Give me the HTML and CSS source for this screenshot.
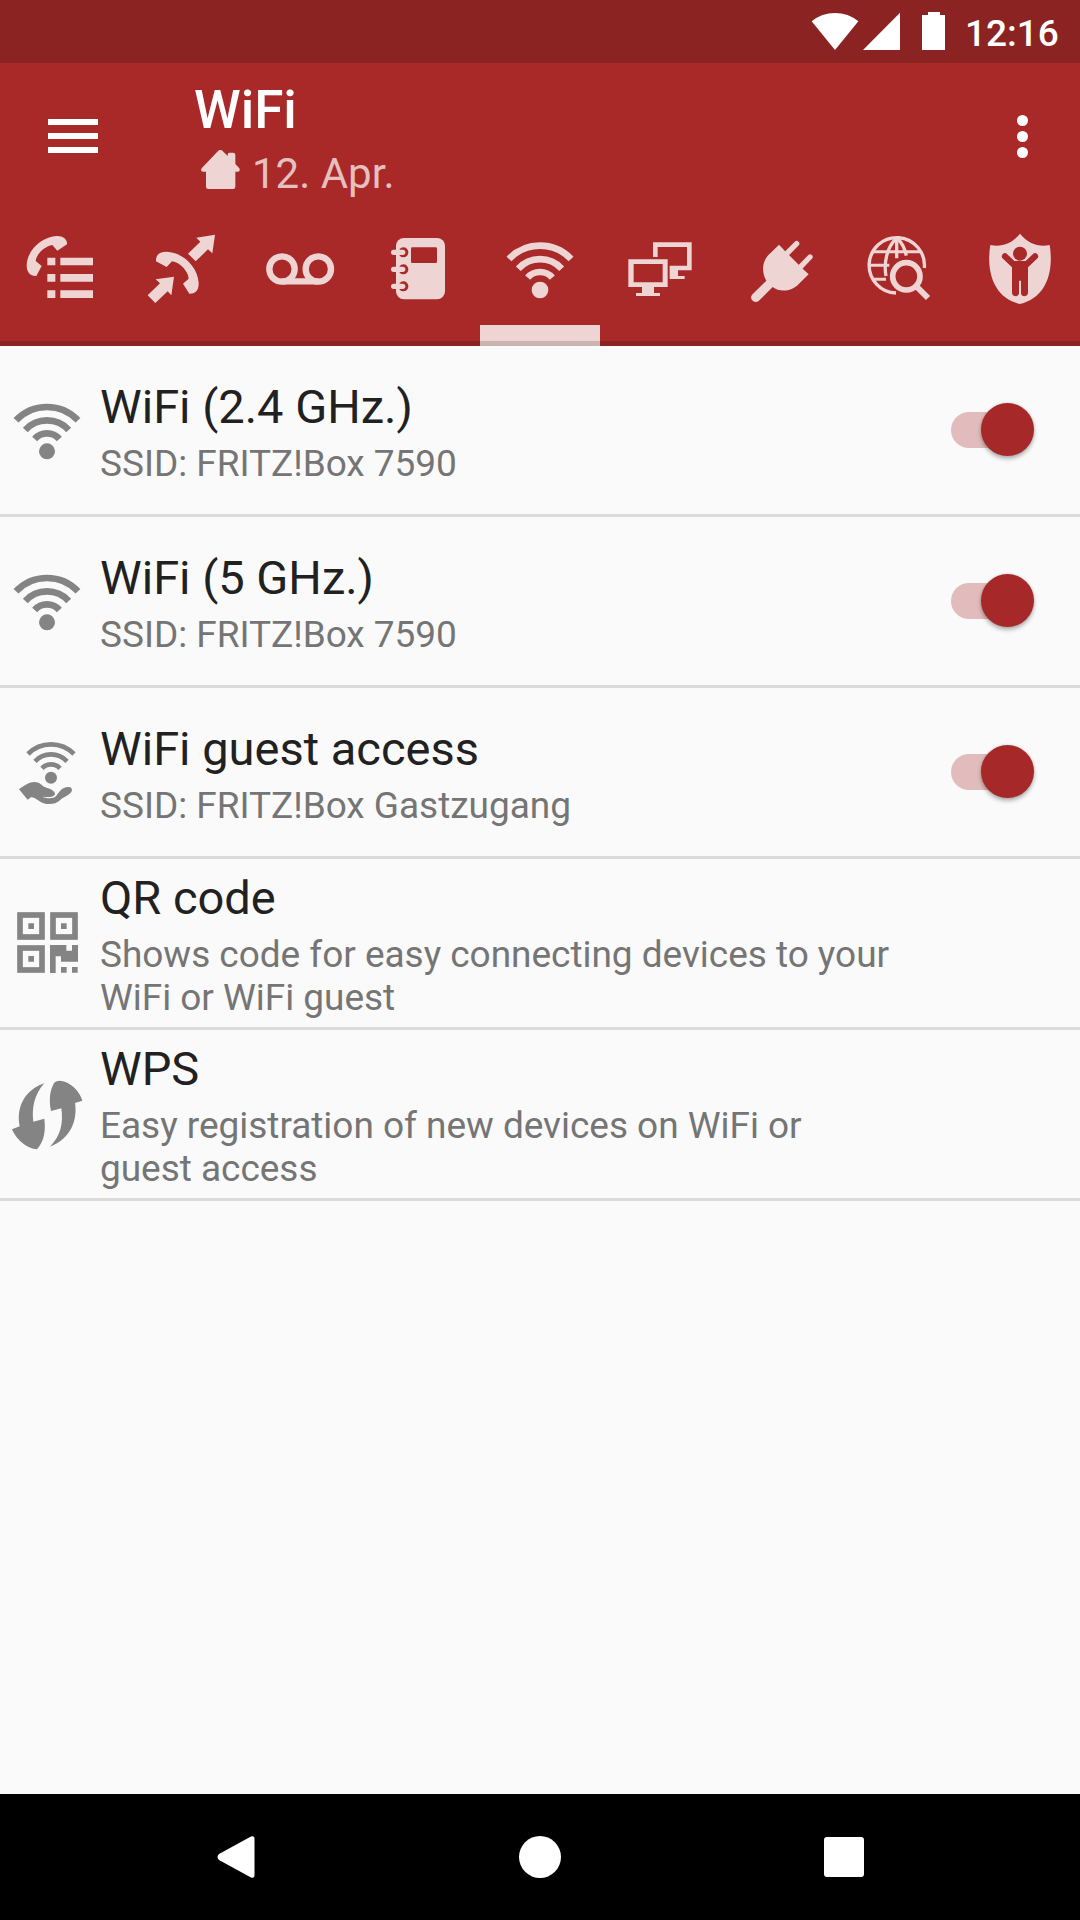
FILE: index.html
```html
<!DOCTYPE html>
<html lang="en">
<head>
  <meta charset="UTF-8">
  <meta name="viewport" content="width=device-width, initial-scale=1.0">
  <title>WiFi</title>
  <link rel="stylesheet" href="styles.css">
</head>
<body>

  <div class="screen">
    <div class="status-bar">
      <svg class="status-icons" viewBox="90 0 405 189">
        <path d="M95 64Q125 39 165 39T235 64L165 150Z"/>
        <path d="M360 38V150H249Z"/>
        <path d="M426 45H444V36H480V45H498V150H426Z"/>
      </svg>
      <span class="clock">12:16</span>
    </div>

    <header class="toolbar">
      <button class="menu-button" aria-label="Menu">
        <span></span>
        <span></span>
        <span></span>
      </button>
      <div class="heading">
        <h1>WiFi</h1>
        <div class="subtitle">
          <svg class="home-icon" viewBox="603 270 117 117">
            <path d="M655 272Q661 267 667 272L683 288V284Q683 278 689 278H699Q706 278 706 284V312L718 325Q722 335 713 335H706V380Q706 387 699 387H625Q618 387 618 380V335H610Q600 335 605 325Z"/>
          </svg>
          <span>12. Apr.</span>
        </div>
      </div>
      <button class="more-button" aria-label="More options">
        <span></span>
        <span></span>
        <span></span>
      </button>
    </header>

    <nav class="tabs">
      <!-- call list -->
      <a class="tab">
        <svg viewBox="0 0 360 408">
          <path d="M170 78C188 77 203 88 201 103L172 122L157 105C135 108 109 132 107 153L125 168L109 198C92 199 80 189 80 165C83 115 130 80 170 78Z"/>
          <path d="M142 143h24v23h-24zM181 143h98v23h-98zM142 192h24v23h-24zM181 192h98v23h-98zM142 241h24v23h-24zM181 241h98v23h-98z"/>
        </svg>
      </a>
      <!-- call redirection -->
      <a class="tab">
        <svg viewBox="360 0 360 408">
          <path d="M468 154C467 133 480 125 500 125C550 127 593 172 596 218C597 245 582 252 568 251L549 221L566 206C565 185 540 156 516 154L500 171Z"/>
          <path d="M645 74L637 130L624 118L587 154L564 131L601 95L589 83Z"/>
          <path d="M522 200L514 256L503 244L466 279L443 256L480 220L467 208Z"/>
        </svg>
      </a>
      <!-- voicemail -->
      <a class="tab">
        <svg class="line" viewBox="720 0 360 408">
          <g stroke-width="19">
            <circle cx="846" cy="177" r="38"/>
            <circle cx="955" cy="177" r="38"/>
            <path d="M846 214H955"/>
          </g>
        </svg>
      </a>
      <!-- phone book -->
      <a class="tab">
        <svg viewBox="0 0 360 408">
          <rect x="108" y="84" width="147" height="184" rx="24"/>
          <rect class="cut" x="153" y="112" width="78" height="47" rx="4"/>
          <g class="cut">
            <path d="M119 117A15 15 0 1 1 119 137Z"/>
            <path d="M119 168A15 15 0 1 1 119 188Z"/>
            <path d="M119 219A15 15 0 1 1 119 239Z"/>
          </g>
          <rect x="93" y="119" width="43" height="16" rx="8"/>
          <rect x="93" y="170" width="43" height="16" rx="8"/>
          <rect x="93" y="221" width="43" height="16" rx="8"/>
        </svg>
      </a>
      <!-- wifi -->
      <a class="tab active">
        <svg viewBox="360 0 360 408">
          <circle cx="540" cy="240" r="25"/>
          <g class="line" stroke-width="20">
            <path d="M447 147A128 128 0 0 1 633 147"/>
            <path d="M475 176A88 88 0 0 1 605 176"/>
            <path d="M503 203A49 49 0 0 1 577 203"/>
          </g>
        </svg>
      </a>
      <!-- network devices -->
      <a class="tab">
        <svg viewBox="720 0 360 408">
          <path d="M879 97H995V181H954V198H974V207H929V167H981V111H893V141H879Z"/>
          <path fill-rule="evenodd" d="M805 148H923V231H882V249H900V258H828V249H846V231H805ZM821 162V217H908V162Z"/>
        </svg>
      </a>
      <!-- smart home -->
      <a class="tab">
        <svg viewBox="0 0 360 408">
          <path d="M177 104L194 122L248 176L266 193L237 221C214 246 178 247 158 231L116 273A14 14 0 0 1 96 254L139 212C124 188 125 151 151 130Z"/>
          <path class="line" stroke-width="16" stroke-linecap="round" d="M199 132L230 101M240 172L270 141"/>
        </svg>
      </a>
      <!-- online monitor -->
      <a class="tab">
        <svg class="line" viewBox="360 0 360 408">
          <path stroke-width="10" d="M613 174A83 83 0 1 0 528 249"/>
          <path stroke-width="9" d="M462 125H602M448 166H508M462 208H498"/>
          <path stroke-width="10" d="M530 84V145M528 86C500 112 491 160 498 198M533 86C548 100 555 117 559 137"/>
          <circle stroke-width="17" cx="559" cy="199" r="41"/>
          <path stroke-width="18" d="M588 228L624 264"/>
        </svg>
      </a>
      <!-- parental control -->
      <a class="tab">
        <svg viewBox="720 0 360 408">
          <path d="M900 71C876 100 846 112 811 105C797 193 826 265 900 282C974 265 1003 193 989 105C955 112 924 100 900 71Z"/>
          <g class="cut">
            <circle cx="900" cy="131" r="21"/>
            <path d="M861 132L883 153H917L939 132A9 9 0 0 1 951 146L924 172V248A11 11 0 0 1 903 252V212H897V252A11 11 0 0 1 876 248V172L849 146A9 9 0 0 1 861 132Z"/>
          </g>
        </svg>
      </a>
    </nav>

    <main class="list">
      <div class="row">
        <svg class="row-icon" viewBox="0 -73 264 504">
          <circle cx="141" cy="243" r="24"/>
          <g class="line" stroke-width="20">
            <path d="M48 150A128 128 0 0 1 234 150"/>
            <path d="M76 179A88 88 0 0 1 206 179"/>
            <path d="M104 206A49 49 0 0 1 178 206"/>
          </g>
        </svg>
        <div class="row-text">
          <h2>WiFi (2.4 GHz.)</h2>
          <p>SSID: FRITZ!Box 7590</p>
        </div>
        <div class="switch"><span class="thumb"></span></div>
      </div>

      <div class="row">
        <svg class="row-icon" viewBox="0 -73 264 504">
          <circle cx="141" cy="243" r="24"/>
          <g class="line" stroke-width="20">
            <path d="M48 150A128 128 0 0 1 234 150"/>
            <path d="M76 179A88 88 0 0 1 206 179"/>
            <path d="M104 206A49 49 0 0 1 178 206"/>
          </g>
        </svg>
        <div class="row-text">
          <h2>WiFi (5 GHz.)</h2>
          <p>SSID: FRITZ!Box 7590</p>
        </div>
        <div class="switch"><span class="thumb"></span></div>
      </div>

      <div class="row">
        <svg class="row-icon" viewBox="0 -66 264 504">
          <circle cx="153" cy="203" r="18"/>
          <g class="line" stroke-width="14">
            <path d="M84 132A97 97 0 0 1 222 132"/>
            <path d="M105 154A66 66 0 0 1 201 154"/>
            <path d="M126 175A37 37 0 0 1 180 175"/>
          </g>
          <path d="M57 238C74 226 86 216 104 216C120 216 126 228 136 232C151 237 165 243 165 252C162 263 142 262 127 260C142 266 160 267 169 257C177 247 186 231 204 231Q216 230 216 241C213 255 190 261 181 270C165 286 135 285 121 275C106 265 99 261 93 262L83 269Z"/>
        </svg>
        <div class="row-text">
          <h2>WiFi guest access</h2>
          <p>SSID: FRITZ!Box Gastzugang</p>
        </div>
        <div class="switch"><span class="thumb"></span></div>
      </div>

      <div class="row">
        <svg class="row-icon" viewBox="0 -3 264 504">
          <g class="line" stroke-width="17">
            <rect x="60" y="165" width="66" height="66"/>
            <rect x="159" y="165" width="66" height="66"/>
            <rect x="60" y="264" width="66" height="66"/>
          </g>
          <path d="M85 190h17v17h-17zM183 190h17v17h-17zM85 288h17v17h-17zM183 321h17v17h-17zM216 321h17v17h-17z"/>
          <path d="M150 255H199V272H216V255H234V305H183V289H167V339H150Z"/>
        </svg>
        <div class="row-text">
          <h2>QR code</h2>
          <p>Shows code for easy connecting devices to your WiFi or WiFi guest</p>
        </div>
      </div>

      <div class="row">
        <svg class="row-icon" viewBox="0 0 264 504">
          <path d="M133 160C92 173 45 215 59 289L36 298C47 326 80 357 111 358C134 332 137 300 133 266L100 275C95 236 102 194 133 160Z"/>
          <path d="M150 350C183 316 190 280 184 235L153 243C146 209 150 180 162 160Q166 152 180 152C213 155 240 185 247 212L225 219C233 272 212 326 150 350Z"/>
        </svg>
        <div class="row-text">
          <h2>WPS</h2>
          <p>Easy registration of new devices on WiFi or guest access</p>
        </div>
      </div>
    </main>

    <footer class="nav-bar">
      <div class="nav-item">
        <svg viewBox="0 0 42 42"><path d="M36 .5Q39.500-.5 39.500 3V39Q39.500 42.500 36 41.500L4 24Q1 21 4 18Z"/></svg>
      </div>
      <div class="nav-item">
        <svg viewBox="0 0 42 42"><circle cx="21" cy="21" r="21"/></svg>
      </div>
      <div class="nav-item">
        <svg viewBox="0 0 42 42"><rect x="1" y="1" width="40" height="40" rx="3"/></svg>
      </div>
    </footer>
  </div>

</body>
</html>
```

FILE: styles.css
```css
* {
  box-sizing: border-box;
}
body {
  margin: 0;
  font-family: Roboto, "Noto Sans", sans-serif;
  background-color: #fafafa;
}
h1, h2, p {
  margin: 0;
}
button {
  padding: 0;
  border: none;
  background: none;
}
svg {
  display: block;
  fill: currentColor;
}
.line {
  fill: none;
  stroke: currentColor;
}
.cut {
  fill: #a92929;
}
.screen {
  display: flex;
  flex-direction: column;
  width: 1080px;
  height: 1920px;
}

/* status bar */
.status-bar {
  display: flex;
  justify-content: flex-end;
  align-items: center;
  height: 63px;
  padding-right: 21px;
  background-color: #8c2323;
  color: #fff;
}
.status-icons {
  width: 135px;
  height: 63px;
  margin-right: 20px;
}
.clock {
  width: 94px;
  font-size: 37px;
  font-weight: 500;
  line-height: 43px;
  padding-top: 3px;
}

/* toolbar */
.toolbar {
  display: flex;
  height: 147px;
  background-color: #a92929;
  color: #fff;
}
.menu-button {
  display: flex;
  flex-direction: column;
  gap: 8.5px;
  width: 50px;
  margin: 56px 96px 0 48px;
}
.menu-button span {
  height: 5.6px;
  background-color: #fff;
}
.heading {
  flex: 1;
  padding-top: 16px;
}
.heading h1 {
  font-size: 53px;
  font-weight: 500;
  line-height: 62px;
}
.subtitle {
  display: flex;
  align-items: center;
  gap: 12px;
  padding-left: 7px;
  font-size: 42px;
  line-height: 49px;
  color: #e6bfbf;
  margin-top: 8px;
}
.home-icon {
  width: 39px;
  height: 39px;
  color: #efd4d4;
  margin-bottom: 8px;
}
.more-button {
  display: flex;
  flex-direction: column;
  gap: 5px;
  width: 11px;
  margin: 52px 52px 0 0;
}
.more-button span {
  height: 11px;
  border-radius: 50%;
  background-color: #fff;
}

/* tabs */
.tabs {
  display: grid;
  grid-template-columns: repeat(9, 120px);
  height: 136px;
  background: linear-gradient(#a92929 131px, #8c2323 131px);
  color: #efd4d4;
}
.tab svg {
  width: 120px;
  height: 136px;
}
.tab.active {
  background: linear-gradient(transparent 115px, #efd4d4 115px, #efd4d4 131px, #c9b4b2 131px);
}

/* list */
.list {
  flex: 1;
}
.row {
  display: flex;
  align-items: center;
  height: 171px;
  border-bottom: 3px solid #dbdbdb;
}
.row-icon {
  width: 88px;
  height: 168px;
  color: #848484;
}
.row-text {
  width: 800px;
  margin-left: 12px;
  padding: 3px 4px 0 0;
}
.row-text h2 {
  font-size: 47px;
  font-weight: 400;
  line-height: 56px;
  color: #212121;
}
.row-text p {
  font-size: 37px;
  line-height: 43px;
  letter-spacing: -0.03px;
  margin-top: 7px;
  color: #757575;
}
.switch {
  display: flex;
  align-items: center;
  justify-content: flex-end;
  width: 83px;
  height: 36px;
  margin-left: 51px;
  margin-bottom: 1px;
  border-radius: 18px;
  background: linear-gradient(90deg, #e2bcbc 60px, transparent 60px);
}
.thumb {
  flex: none;
  width: 53px;
  height: 53px;
  margin-bottom: 1px;
  border-radius: 50%;
  background-color: #a62828;
  box-shadow: 0 3px 4px rgba(0, 0, 0, 0.28), 0 0 3px rgba(0, 0, 0, 0.15);
}

/* navigation bar */
.nav-bar {
  display: flex;
  justify-content: center;
  height: 126px;
  background-color: #000;
  color: #fff;
}
.nav-item {
  display: flex;
  align-items: center;
  justify-content: center;
  width: 304px;
}
.nav-item svg {
  width: 42px;
  height: 42px;
}
```
